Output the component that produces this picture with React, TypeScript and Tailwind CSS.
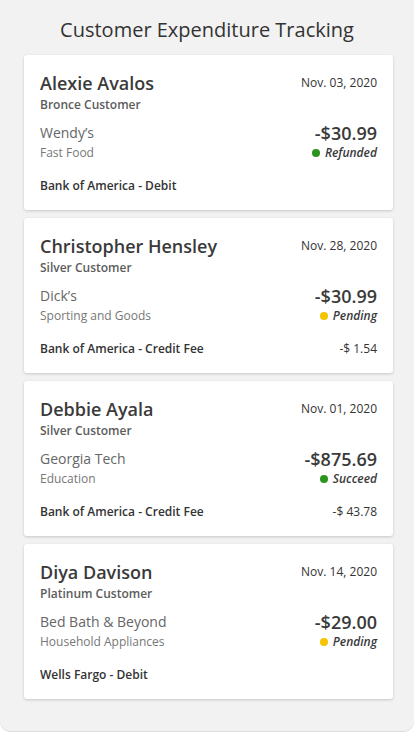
import React from "react";

interface Expense {
  name: string;
  tier: string;
  date: string;
  merchant: string;
  category: string;
  amount: string;
  status: "Refunded" | "Pending" | "Succeed";
  account: string;
  fee?: string;
}

const expenses: Expense[] = [
  {
    name: "Alexie Avalos",
    tier: "Bronce Customer",
    date: "Nov. 03, 2020",
    merchant: "Wendy’s",
    category: "Fast Food",
    amount: "-$30.99",
    status: "Refunded",
    account: "Bank of America - Debit",
  },
  {
    name: "Christopher Hensley",
    tier: "Silver Customer",
    date: "Nov. 28, 2020",
    merchant: "Dick’s",
    category: "Sporting and Goods",
    amount: "-$30.99",
    status: "Pending",
    account: "Bank of America - Credit Fee",
    fee: "-$ 1.54",
  },
  {
    name: "Debbie Ayala",
    tier: "Silver Customer",
    date: "Nov. 01, 2020",
    merchant: "Georgia Tech",
    category: "Education",
    amount: "-$875.69",
    status: "Succeed",
    account: "Bank of America - Credit Fee",
    fee: "-$ 43.78",
  },
  {
    name: "Diya Davison",
    tier: "Platinum Customer",
    date: "Nov. 14, 2020",
    merchant: "Bed Bath & Beyond",
    category: "Household Appliances",
    amount: "-$29.00",
    status: "Pending",
    account: "Wells Fargo - Debit",
  },
];

function ExpenseCard({ e }: { e: Expense }) {
  return (
    <div className="bg-white rounded-[3px] shadow-[0_1px_3px_rgba(0,0,0,0.18)] px-4 pt-4 pb-4">
      <div className="flex items-center justify-between">
        <span className="text-[18px] leading-6 font-semibold text-[#3a3a3a]">{e.name}</span>
        <span className="text-[12px] leading-4 text-[#333]">{e.date}</span>
      </div>
      <div className="mt-[2px] text-[12px] leading-4 font-semibold text-[#5c5c5c]">{e.tier}</div>

      <div className="mt-2.5 flex items-center justify-between">
        <span className="text-[14px] leading-5 text-[#666]">{e.merchant}</span>
        <span className="text-[18px] leading-5 font-semibold text-[#3a3a3a]">{e.amount}</span>
      </div>
      <div className="mt-0.5 flex items-center justify-between">
        <span className="text-[12px] leading-4 text-[#777]">{e.category}</span>
        <span className="flex items-center gap-[5px] text-[12px] leading-4 italic font-semibold text-[#3a3a3a]">
          <span
            className={`w-2 h-2 rounded-full ${
              e.status === "Pending" ? "bg-[#f5c400]" : "bg-[#2a941e]"
            }`}
          />
          {e.status}
        </span>
      </div>

      <div className="mt-[17px] flex items-center justify-between">
        <span className="text-[12px] leading-4 font-semibold text-[#333]">{e.account}</span>
        {e.fee && <span className="text-[12px] leading-4 text-[#333]">{e.fee}</span>}
      </div>
    </div>
  );
}

export default function App() {
  return (
    <div className="min-h-[732px] bg-[#f2f2f2] rounded-b-[10px] border-b border-[#dcdcdc] font-['Open_Sans',sans-serif]">
      <h1 className="pt-[18px] pb-[13px] text-center text-[20px] leading-6 text-[#333]">
        Customer Expenditure Tracking
      </h1>
      <div className="ml-6 mr-[21px] flex flex-col gap-2">
        {expenses.map((e) => (
          <ExpenseCard key={e.name} e={e} />
        ))}
      </div>
    </div>
  );
}
